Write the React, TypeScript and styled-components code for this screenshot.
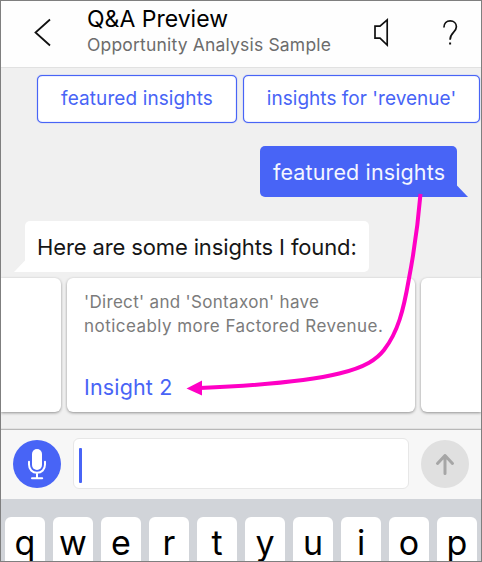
import React from "react";
import styled, { createGlobalStyle } from "styled-components";

const Global = createGlobalStyle`
  * { box-sizing: border-box; }
  body { margin: 0; font-family: Inter, "Liberation Sans", sans-serif; }
`;

const Screen = styled.main`
  position: relative;
  width: 482px;
  height: 562px;
  border: 1px solid #7f7f7f;
  background: #f0f0f0;
  overflow: hidden;
  display: flex;
  flex-direction: column;
`;

const Header = styled.header`
  height: 67px;
  flex: none;
  display: flex;
  background: #fefefe;
  border-bottom: 1px solid #e1e1e1;
`;

const IconButton = styled.button<{ $width: number }>`
  width: ${(p) => p.$width}px;
  height: 66px;
  padding: 0;
  border: 0;
  background: none;
  flex: none;
  svg { display: block; }
`;

const Titles = styled.div`
  flex: 1;
  padding-top: 4px;
  white-space: nowrap;
`;

const Title = styled.h1`
  margin: 0;
  font-size: 23px;
  font-weight: 400;
  line-height: 28px;
  letter-spacing: 0;
  color: #000;
`;

const Subtitle = styled.div`
  font-size: 17.5px;
  line-height: 24px;
  letter-spacing: 0.18px;
  color: #6c6c6c;
`;

const Suggestions = styled.div`
  display: flex;
  flex: none;
  gap: 6px;
  padding: 7px 0 0 36px;
`;

const Chip = styled.button<{ $width: number; $spacing: number }>`
  flex: none;
  width: ${(p) => p.$width}px;
  height: 48px;
  padding: 0 0 1px;
  border: 1px solid #4864f6;
  border-radius: 5px;
  background: #fff;
  box-shadow: 0 0 1px #4864f6, inset 0 0 1px #4864f6;
  color: #4864f6;
  font: 400 19px/44px Inter, sans-serif;
  letter-spacing: ${(p) => p.$spacing}px;
  white-space: nowrap;
`;

const Bubble = styled.div<{ $mine?: boolean }>`
  position: relative;
  flex: none;
  align-self: ${(p) => (p.$mine ? "flex-end" : "flex-start")};
  width: ${(p) => (p.$mine ? 197 : 344)}px;
  height: 51px;
  margin: ${(p) => (p.$mine ? "23px 24px 0 0" : "24px 0 0 24px")};
  padding-left: ${(p) => (p.$mine ? 13 : 12)}px;
  border-radius: ${(p) => (p.$mine ? "5px 5px 0 5px" : "5px 5px 5px 0")};
  background: ${(p) => (p.$mine ? "#4864f6" : "#fff")};
  color: ${(p) => (p.$mine ? "#f4f6ff" : "#161616")};
  font-size: ${(p) => (p.$mine ? 21.5 : 22)}px;
  line-height: ${(p) => (p.$mine ? 53 : 52)}px;
  letter-spacing: ${(p) => (p.$mine ? 0.13 : -0.13)}px;
  white-space: nowrap;

  &::after {
    content: "";
    position: absolute;
    bottom: 0;
    ${(p) => (p.$mine ? "right: -11px;" : "left: -11px;")}
    width: 11.5px;
    height: 12px;
    background: inherit;
    clip-path: ${(p) => (p.$mine ? "polygon(0 0, 100% 100%, 0 100%)" : "polygon(100% 0, 100% 100%, 0 100%)")};
  }
`;

const Cards = styled.div`
  display: flex;
  flex: none;
  gap: 6px;
  height: 134px;
  margin-top: 6px;
`;

const Card = styled.article<{ $width: number; $edge?: "left" | "right" }>`
  flex: none;
  width: ${(p) => p.$width}px;
  padding: 12px 0 0 17px;
  background: #fff;
  border-radius: ${(p) => (p.$edge === "left" ? "0 6px 6px 0" : p.$edge === "right" ? "6px 0 0 6px" : "6px")};
  box-shadow: 0 1px 3px rgba(0, 0, 0, 0.4);
  white-space: nowrap;
`;

const DescriptionLine = styled.p<{ $spacing: number }>`
  margin: 0;
  font-size: 17px;
  line-height: 24px;
  letter-spacing: ${(p) => p.$spacing}px;
  color: #7b7b7b;
`;

const InsightLink = styled.div`
  margin-top: 35px;
  color: #4864f6;
  font-size: 21.5px;
  line-height: 28px;
  letter-spacing: 0.15px;
`;

const Composer = styled.div`
  display: flex;
  flex: none;
  align-items: center;
  gap: 12px;
  height: 70px;
  margin-top: 17px;
  padding: 0 12px 2px;
  background: #f7f7f7;
  border-top: 1px solid #b8b8b8;
  box-shadow: 0 -1px 0 #e2e2e2;
`;

const RoundButton = styled.button<{ $color: string }>`
  flex: none;
  width: 48px;
  height: 48px;
  padding: 0;
  border: 0;
  border-radius: 50%;
  background: ${(p) => p.$color};
  svg { display: block; }
`;

const Field = styled.div`
  flex: 1;
  height: 51px;
  display: flex;
  align-items: center;
  padding-left: 5px;
  border: 1px solid #e7e7e7;
  border-radius: 6px;
  background: #fff;
`;

const Caret = styled.i`
  width: 3px;
  height: 35px;
  margin-top: 4px;
  border-radius: 1px;
  background: #4864f6;
`;

const Keyboard = styled.div`
  display: flex;
  flex: 1;
  gap: 8px;
  padding: 18px 4px 0;
  background: #d1d4d9;
  overflow: hidden;
`;

const Key = styled.div`
  flex: none;
  width: 40px;
  height: 62px;
  border-radius: 6px;
  background: #fff;
  color: #000;
  font-size: 34px;
  font-weight: 400;
  line-height: 52px;
  text-align: center;
`;

const Arrow = styled.svg`
  position: absolute;
  left: -1px;
  top: -1px;
  pointer-events: none;
`;

export default function App() {
  return (
    <>
      <Global />
      <Screen>
        <Header>
          <IconButton $width={86} aria-label="Back">
            <svg width="86" height="66" fill="none" stroke="#111" strokeWidth="1.8">
              <path d="M49 18.5 34.5 31.5 49 44.5" />
            </svg>
          </IconButton>
          <Titles>
            <Title>Q&amp;A Preview</Title>
            <Subtitle>Opportunity Analysis Sample</Subtitle>
          </Titles>
          <IconButton $width={56} aria-label="Sound">
            <svg width="56" height="66" fill="none" stroke="#111" strokeWidth="1.7">
              <path d="M20 25.2H25L32.2 18.8V44L25 37.2H20Z" />
            </svg>
          </IconButton>
          <IconButton $width={70} aria-label="Help">
            <svg width="70" height="66" fill="none" stroke="#111" strokeWidth="1.7">
              <path d="M32.9 26.5C32.9 22.2 35.7 19.9 39.2 19.9C42.8 19.9 45.4 22.2 45.4 25.8C45.4 31.2 39.1 31.2 39.1 38.8" />
              <path d="M39.1 41.5V43.5" strokeWidth="2" />
            </svg>
          </IconButton>
        </Header>
        <Suggestions>
          <Chip $width={200} $spacing={0.1}>featured insights</Chip>
          <Chip $width={237} $spacing={0.03}>insights for 'revenue'</Chip>
        </Suggestions>
        <Bubble $mine>featured insights</Bubble>
        <Bubble>Here are some insights I found:</Bubble>
        <Cards>
          <Card $width={60} $edge="left" />
          <Card $width={348}>
            <DescriptionLine $spacing={0.32}>'Direct' and 'Sontaxon' have</DescriptionLine>
            <DescriptionLine $spacing={0.46}>noticeably more Factored Revenue.</DescriptionLine>
            <InsightLink>Insight 2</InsightLink>
          </Card>
          <Card $width={60} $edge="right" />
        </Cards>
        <Composer>
          <RoundButton $color="#4864f6" aria-label="Dictate">
            <svg width="48" height="48" fill="none" stroke="#fff" strokeWidth="2" strokeLinecap="round">
              <rect x="19" y="9" width="10" height="21" rx="5" fill="#fff" stroke="none" />
              <path d="M16 21.8V24.5C16 29.5 19.3 32.8 24 32.8S32 29.5 32 24.5V21.8M24 33V38M19 38.3H29.2" />
            </svg>
          </RoundButton>
          <Field><Caret /></Field>
          <RoundButton $color="#e0e0e0" aria-label="Send">
            <svg width="48" height="48" fill="none" stroke="#a6a6a6" strokeWidth="3" strokeLinecap="round" strokeLinejoin="round">
              <path d="M24 33.5V15.5M16.5 23.5 24 15.5 31.5 23.5" />
            </svg>
          </RoundButton>
        </Composer>
        <Keyboard>
          {"qwertyuiop".split("").map((k) => <Key key={k}>{k}</Key>)}
        </Keyboard>
        <Arrow width="482" height="562" fill="none">
          <path d="M420.5 194C417.5 230 413.5 255 408.7 280C403.5 310 398 332 384 350C370 368 340 382 200 388" stroke="#ff00c5" strokeWidth="4" />
          <path d="M186.5 388.5 202 380.5V395.5Z" fill="#ff00c5" />
        </Arrow>
      </Screen>
    </>
  );
}
